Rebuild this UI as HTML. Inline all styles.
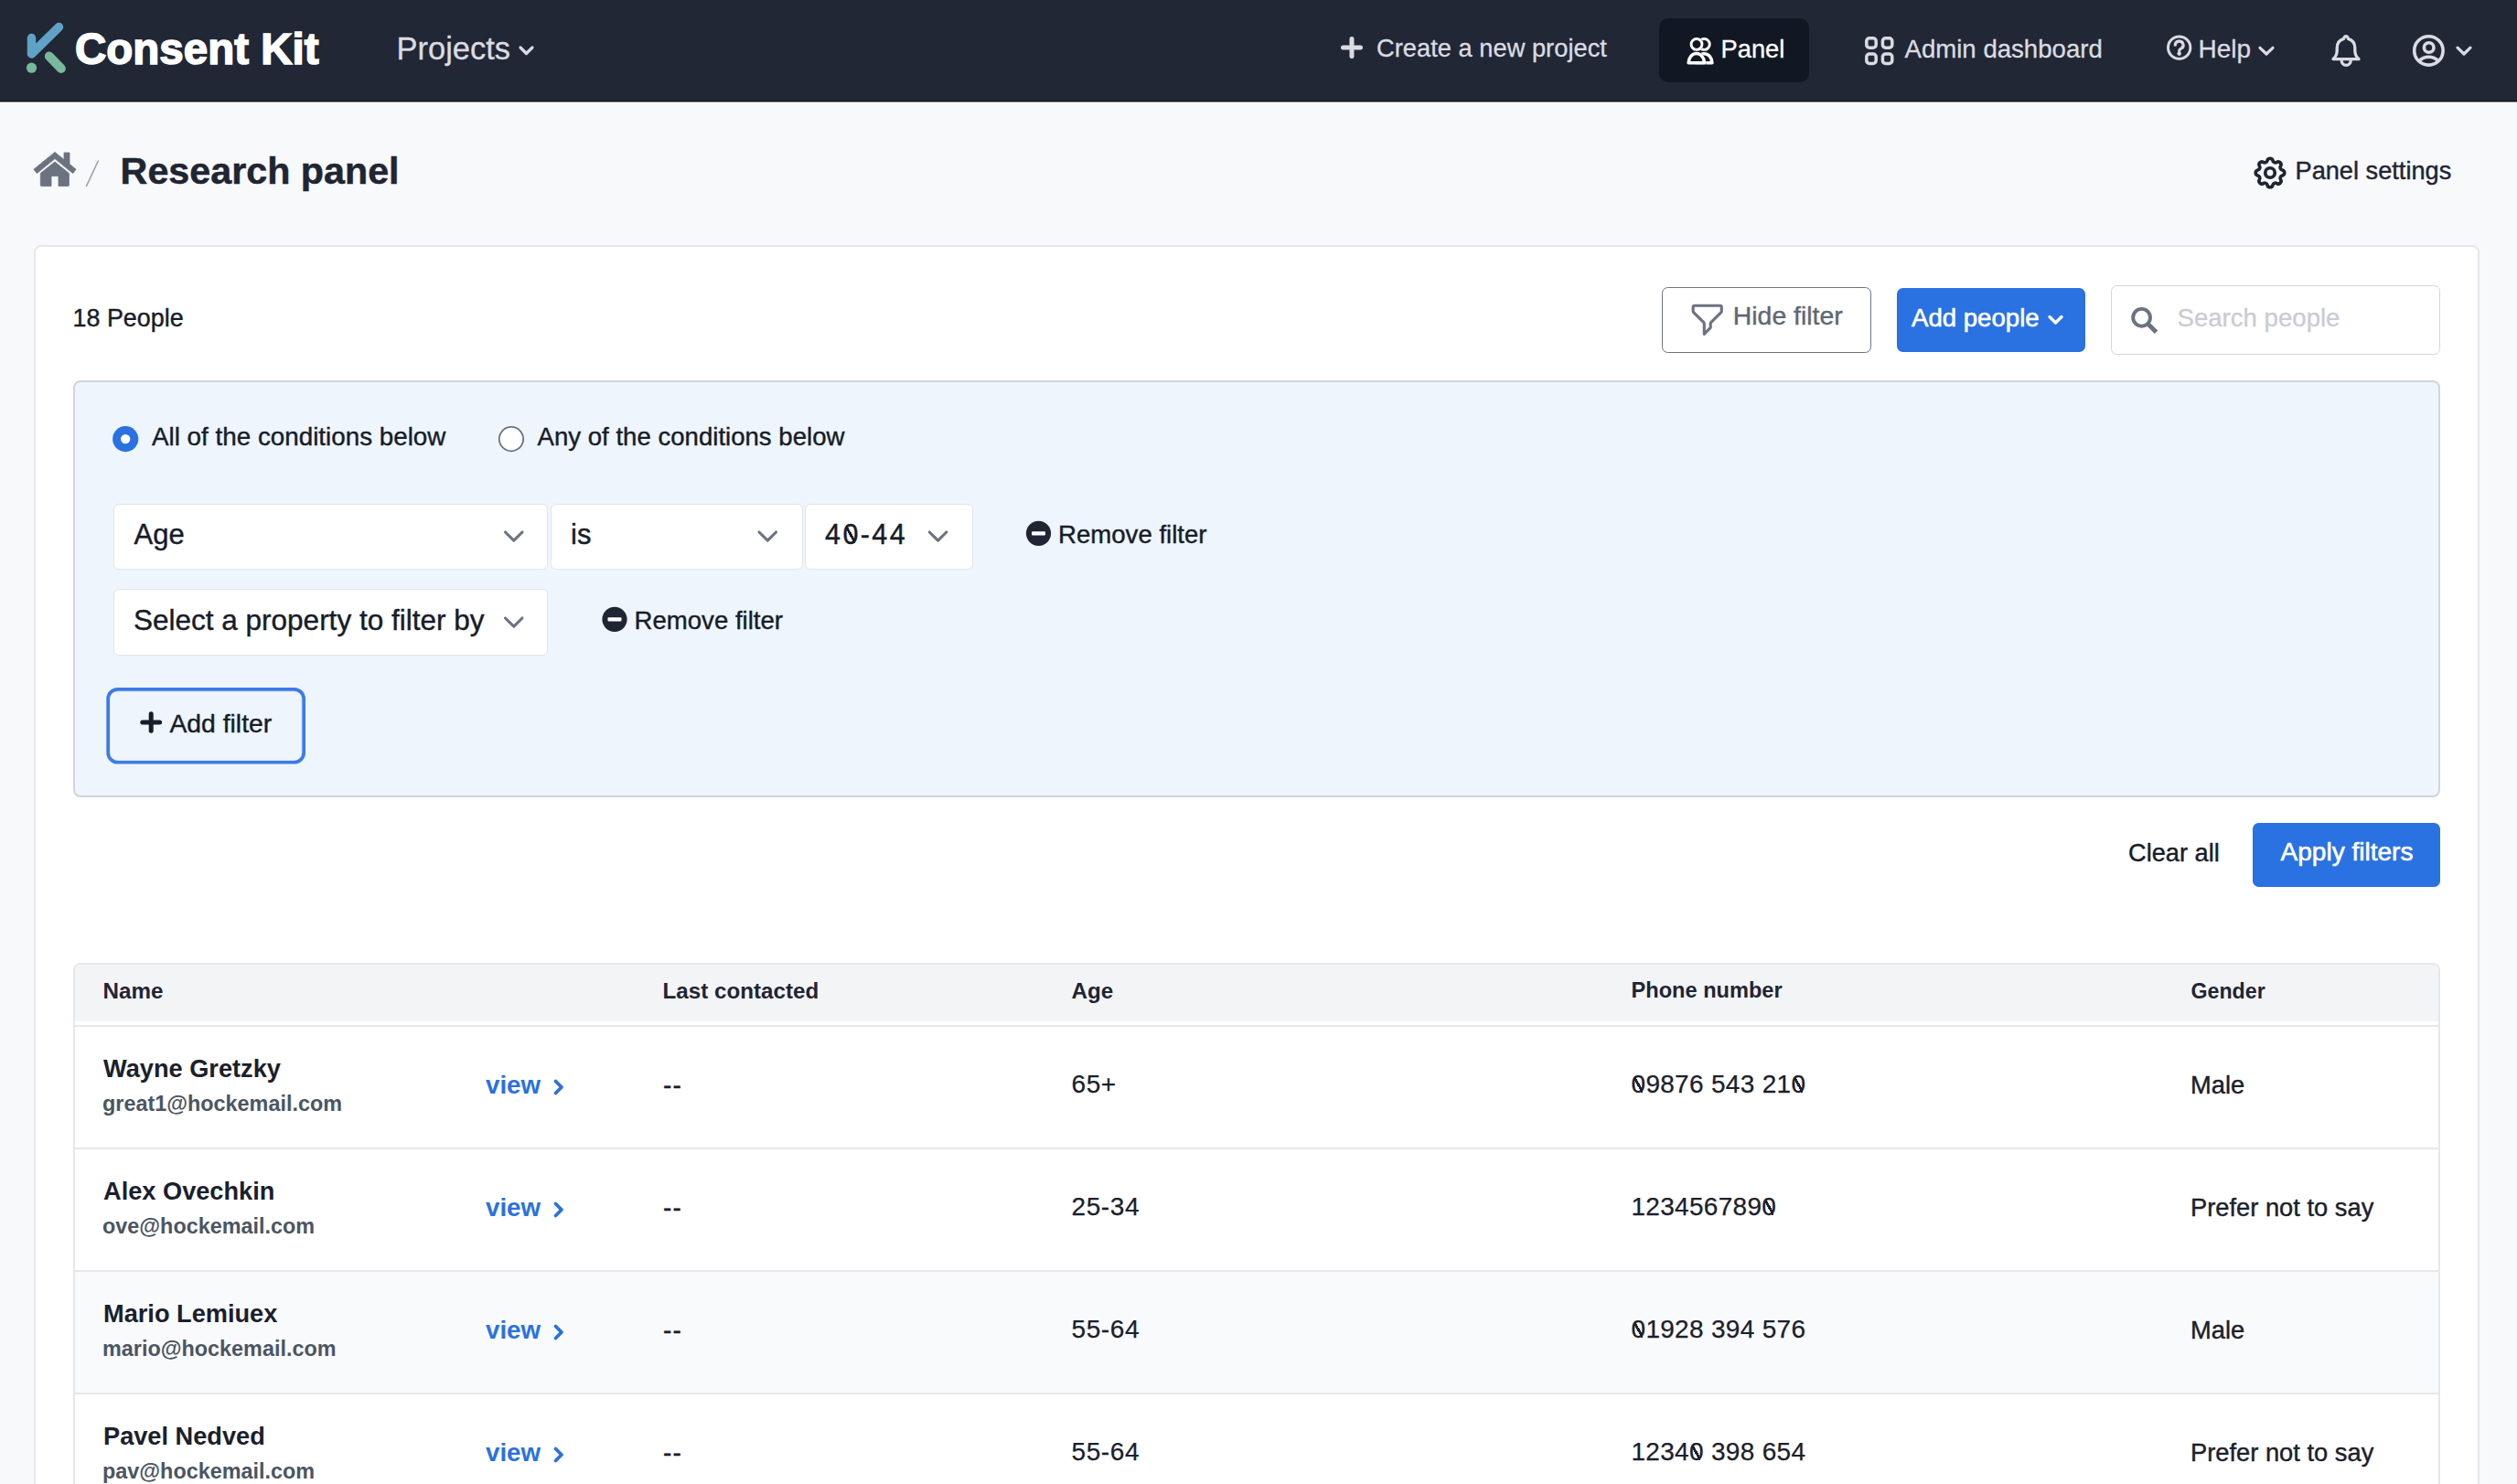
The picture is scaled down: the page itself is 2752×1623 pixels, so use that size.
<!DOCTYPE html>
<html><head><meta charset="utf-8">
<style>
html,body{margin:0;padding:0;}
body{width:2752px;height:1623px;overflow:hidden;position:relative;background:#f8f9fb;font-family:"Liberation Sans",sans-serif;color:#1f2533;}
.a{position:absolute;white-space:nowrap;line-height:1;}
.m{-webkit-text-stroke:0.4px currentColor;}
.mn{-webkit-text-stroke:0.25px currentColor;}
svg{position:absolute;left:0;top:0;overflow:visible;}
.z{position:relative;display:inline-block;}
.z::after{content:"";position:absolute;left:0.12em;width:0.32em;top:0.2em;height:0.6em;background:linear-gradient(to top right,transparent calc(50% - 1.4px),currentColor calc(50% - 1.4px),currentColor calc(50% + 1.4px),transparent calc(50% + 1.4px));}
.box{position:absolute;box-sizing:border-box;}
.sel{position:absolute;background:#fff;border:1.5px solid #e2e5ea;border-radius:6px;box-sizing:border-box;}
</style></head>
<body>
<div class="box" style="left:0;top:0;width:2752px;height:111px;background:#212735;border-bottom:1px solid #0d121c;"></div>
<div class="box" style="left:0;top:111px;width:2752px;height:1px;background:#80858e;"></div>
<div class="box" style="left:0;top:112px;width:2752px;height:1px;background:#fdfdfe;"></div>
<svg width="1" height="1">
  <path d="M34.5,41.5 L34.5,59 L64.5,29.5" fill="none" stroke="#5fa2c6" stroke-width="9.5" stroke-linecap="round" stroke-linejoin="round"/>
  <circle cx="34.5" cy="74.2" r="5.6" fill="#78b89c"/>
  <path d="M53.8,61.5 L66.9,74.9" fill="none" stroke="#78b89c" stroke-width="10" stroke-linecap="round"/>
</svg>
<div class="a" style="left:82.0px;top:29.62px;font-size:47.5px;font-weight:700;color:#fff;-webkit-text-stroke:1.6px #fff;letter-spacing:0px;">Consent Kit</div>
<div class="a" style="left:433.5px;top:35.67px;font-size:34.5px;font-weight:400;color:#dadce2;-webkit-text-stroke:0.3px currentColor;">Projects</div>
<svg width="1" height="1"><path d="M569,52 L575.5,58.5 L582,52" fill="none" stroke="#dadce2" stroke-width="3.2" stroke-linecap="round" stroke-linejoin="round"/></svg>
<svg width="1" height="1"><path d="M1478,42.5 V61.5 M1468.5,52 H1487.5" fill="none" stroke="#dadce2" stroke-width="5" stroke-linecap="round"/></svg>
<div class="a" style="left:1505.0px;top:39.40px;font-size:27.3px;font-weight:400;color:#dadce2;-webkit-text-stroke:0.3px currentColor;">Create a new project</div>
<div class="box" style="left:1814px;top:20px;width:164px;height:70px;background:#121823;border-radius:10px;"></div>
<svg width="1" height="1">
  <defs><mask id="pm" maskUnits="userSpaceOnUse" x="1820" y="25" width="80" height="60">
    <rect x="1820" y="25" width="80" height="60" fill="#fff"/>
    <circle cx="1855" cy="48.4" r="7.4" fill="#000"/>
    <path d="M1844.4,70.45 V68.7 A10.45,11.85 0 0 1 1865.3,68.7 V70.45 Z" fill="#000"/>
  </mask></defs>
  <g fill="none" stroke="#fff" stroke-linejoin="round">
    <circle cx="1855" cy="48.4" r="5.95" stroke-width="2.9"/>
    <path d="M1846.15,68.7 A8.7,10.1 0 0 1 1863.55,68.7 Z" stroke-width="3.5"/>
    <g mask="url(#pm)">
      <circle cx="1863.3" cy="48.4" r="5.95" stroke-width="2.9"/>
      <path d="M1854.55,68.7 A8.7,10.1 0 0 1 1871.95,68.7 Z" stroke-width="3.5"/>
    </g>
  </g>
</svg>
<div class="a" style="left:1881.5px;top:39.80px;font-size:27.3px;font-weight:400;color:#fff;-webkit-text-stroke:0.3px currentColor;">Panel</div>
<svg width="1" height="1">
  <g fill="none" stroke="#dadce2" stroke-width="3.5">
  <rect x="2040.8" y="41.8" width="10.4" height="10.4" rx="3.2"/>
  <rect x="2058.4" y="41.8" width="10.4" height="10.4" rx="3.2"/>
  <rect x="2040.8" y="59.1" width="10.4" height="10.4" rx="3.2"/>
  <rect x="2058.4" y="59.1" width="10.4" height="10.4" rx="3.2"/>
  </g>
</svg>
<div class="a" style="left:2082.5px;top:39.54px;font-size:27.6px;font-weight:400;color:#dadce2;-webkit-text-stroke:0.3px currentColor;">Admin dashboard</div>
<svg width="1" height="1">
  <circle cx="2382.7" cy="52.1" r="12.2" fill="none" stroke="#dadce2" stroke-width="3"/>
  <path d="M2378.3,49.2 A4.4,4.2 0 1 1 2384.6,53.1 C2383.1,53.9 2382.7,54.6 2382.7,55.4" fill="none" stroke="#dadce2" stroke-width="3.2" stroke-linecap="round"/>
  <circle cx="2382.7" cy="58.6" r="2.3" fill="#dadce2"/>
</svg>
<div class="a" style="left:2403.5px;top:39.80px;font-size:28px;font-weight:400;color:#dadce2;-webkit-text-stroke:0.3px currentColor;">Help</div>
<svg width="1" height="1"><path d="M2471,52.3 L2478,59 L2485,52.3" fill="none" stroke="#dadce2" stroke-width="3.2" stroke-linecap="round" stroke-linejoin="round"/></svg>
<svg width="1" height="1">
  <g fill="none" stroke="#dadce2" stroke-width="3.3" stroke-linejoin="round" stroke-linecap="round">
  <path d="M2551,64.6 C2554,62 2555.2,59.5 2555.2,55.5 V52.5 C2555.2,47 2558.5,43.5 2562.6,42.3 C2563,40.6 2564,39.6 2565,39.6 C2566,39.6 2567,40.6 2567.4,42.3 C2571.5,43.5 2574.8,47 2574.8,52.5 V55.5 C2574.8,59.5 2576,62 2579,64.6 Z"/>
  <path d="M2560.2,66.3 A5,5 0 0 0 2570.2,66.3"/>
  </g>
</svg>
<svg width="1" height="1">
  <g fill="none" stroke="#dadce2" stroke-width="3.6">
  <circle cx="2655.4" cy="55.4" r="15.7"/>
  <circle cx="2655.7" cy="52" r="5.3"/>
  <path d="M2645,66.8 C2648,63.6 2651.5,62.3 2655.5,62.3 C2659.5,62.3 2663,63.6 2666,66.8"/>
  </g>
  <path d="M2687,52.2 L2694,59 L2701,52.2" fill="none" stroke="#dadce2" stroke-width="3.2" stroke-linecap="round" stroke-linejoin="round"/>
</svg>
<svg width="1" height="1">
  <g fill="#6b7280" stroke="#6b7280" stroke-width="0.8" stroke-linejoin="round">
  <path d="M36.9,185.2 L60,166.4 L83.1,185.2 L79.6,189.6 L60,173.6 L40.4,189.6 Z"/>
  <rect x="70" y="167" width="6" height="13"/>
  <path d="M44.3,189.5 L60,177 L75.4,189.5 V202.5 Q75.4,203.6 74.3,203.6 H64 V192.6 H56 V203.6 H45.4 Q44.3,203.6 44.3,202.5 Z"/>
  </g>
  <path d="M94.6,203.3 L107.3,176" stroke="#9ca3af" stroke-width="1.6" stroke-linecap="round"/>
</svg>
<div class="a" style="left:131.6px;top:166.74px;font-size:41.25px;font-weight:700;color:#1f2533;-webkit-text-stroke:0.5px currentColor;">Research panel</div>
<svg style="left:2460.6px;top:168.3px" width="42" height="42" viewBox="0 0 24 24">
  <g fill="none" stroke="#1f2533" stroke-width="2.1" stroke-linecap="round" stroke-linejoin="round">
  <path d="M10.325 4.317c.426-1.756 2.924-1.756 3.35 0a1.724 1.724 0 002.573 1.066c1.543-.94 3.31.826 2.37 2.37a1.724 1.724 0 001.065 2.572c1.756.426 1.756 2.924 0 3.35a1.724 1.724 0 00-1.066 2.573c.94 1.543-.826 3.31-2.37 2.37a1.724 1.724 0 00-2.572 1.065c-.426 1.756-2.924 1.756-3.35 0a1.724 1.724 0 00-2.573-1.066c-1.543.94-3.310-.826-2.370-2.370a1.724 1.724 0 00-1.065-2.572c-1.756-.426-1.756-2.924 0-3.350a1.724 1.724 0 001.066-2.573c-.94-1.543.826-3.310 2.370-2.370.996.608 2.296.07 2.572-1.065z"/>
  <path d="M15 12a3 3 0 11-6 0 3 3 0 016 0z"/>
  </g>
</svg>
<div class="a" style="left:2509.5px;top:173.38px;font-size:27.2px;font-weight:400;color:#1f2533;-webkit-text-stroke:0.4px currentColor;">Panel settings</div>
<div class="box" style="left:37px;top:268px;width:2674px;height:1500px;background:#fff;border:2px solid #e5e7eb;border-radius:8px;"></div>
<div class="a" style="left:79.5px;top:335.03px;font-size:26.9px;font-weight:400;color:#161c28;-webkit-text-stroke:0.4px currentColor;">18 People</div>
<div class="box" style="left:1816.5px;top:313.5px;width:229.5px;height:72.5px;border:1.75px solid #6b7280;border-radius:6.5px;background:#fff;"></div>
<svg style="left:1846px;top:328.7px" width="41.5" height="41.5" viewBox="0 0 24 24">
  <path d="M3 4a1 1 0 011-1h16a1 1 0 011 1v2.586a1 1 0 01-.293.707l-6.414 6.414a1 1 0 00-.293.707V17l-4 4v-6.586a1 1 0 00-.293-.707L3.293 7.293A1 1 0 013 6.586V4z" fill="none" stroke="#6b7280" stroke-width="1.8" stroke-linecap="round" stroke-linejoin="round"/>
</svg>
<div class="a" style="left:1894.8px;top:330.96px;font-size:28.4px;font-weight:400;color:#5f6774;-webkit-text-stroke:0.4px currentColor;">Hide filter</div>
<div class="box" style="left:2074px;top:315px;width:206px;height:70px;border-radius:6.5px;background:#2a71e1;"></div>
<div class="a" style="left:2090.0px;top:333.74px;font-size:27.6px;font-weight:400;color:#fff;-webkit-text-stroke:0.6px currentColor;">Add people</div>
<svg width="1" height="1"><path d="M2241,346.5 L2247.5,353 L2254,346.5" fill="none" stroke="#fff" stroke-width="3.4" stroke-linecap="round" stroke-linejoin="round"/></svg>
<div class="box" style="left:2308px;top:312px;width:359.5px;height:75.5px;border:1.5px solid #d3d6dc;border-radius:6.5px;background:#fff;"></div>
<svg width="1" height="1">
  <circle cx="2341.6" cy="347.3" r="9.4" fill="none" stroke="#6b7280" stroke-width="3.9"/>
  <path d="M2348,353.7 L2357.6,363.3" stroke="#6b7280" stroke-width="4.8" stroke-linecap="butt"/>
</svg>
<div class="a" style="left:2380.5px;top:333.54px;font-size:27.6px;font-weight:400;color:#c9ccd3;-webkit-text-stroke:0.3px currentColor;">Search people</div>
<div class="box" style="left:80px;top:416px;width:2588px;height:456px;background:#eef5fd;border:2px solid #d1d5db;border-radius:8px;"></div>
<svg width="1" height="1">
  <circle cx="137.2" cy="480.1" r="14.1" fill="#2a71e1"/>
  <circle cx="137.2" cy="480.1" r="5.2" fill="#fff"/>
  <circle cx="559" cy="480.1" r="13.2" fill="#fff" stroke="#6b7280" stroke-width="1.8"/>
</svg>
<div class="a" style="left:166.0px;top:464.07px;font-size:27.8px;font-weight:400;color:#161c28;-webkit-text-stroke:0.4px currentColor;">All of the conditions below</div>
<div class="a" style="left:587.5px;top:464.24px;font-size:27.6px;font-weight:400;color:#161c28;-webkit-text-stroke:0.4px currentColor;">Any of the conditions below</div>
<div class="sel" style="left:124px;top:550.5px;width:475px;height:72px;"></div>
<div class="sel" style="left:602px;top:550.5px;width:276px;height:72px;"></div>
<div class="sel" style="left:880px;top:550.5px;width:183.5px;height:72px;"></div>
<div class="sel" style="left:124px;top:644px;width:475px;height:72.5px;"></div>
<div class="a" style="left:146.5px;top:568.85px;font-size:31px;font-weight:400;color:#161c28;-webkit-text-stroke:0.4px currentColor;">Age</div>
<div class="a" style="left:624.0px;top:568.85px;font-size:31px;font-weight:400;color:#161c28;-webkit-text-stroke:0.4px currentColor;">is</div>
<div class="a" style="left:902.0px;top:569.28px;font-size:30.5px;font-weight:400;color:#161c28;-webkit-text-stroke:0.4px currentColor;letter-spacing:2.4px;">4<span class="z">0</span>-44</div>
<div class="a" style="left:146.0px;top:662.62px;font-size:31.5px;font-weight:400;color:#161c28;-webkit-text-stroke:0.4px currentColor;">Select a property to filter by</div>
<svg width="1" height="1">
  <g fill="none" stroke="#6b7280" stroke-width="3.1" stroke-linecap="round" stroke-linejoin="round">
  <path d="M552.5,582 L561.8,591.2 L571,582"/>
  <path d="M830,582 L839.3,591.2 L848.5,582"/>
  <path d="M1016.3,582 L1025.6,591.2 L1034.8,582"/>
  <path d="M552.5,676 L561.8,685.2 L571,676"/>
  </g>
</svg>
<svg width="1" height="1">
  <circle cx="1135.5" cy="583.3" r="13.6" fill="#1f2533"/>
  <rect x="1128" y="581.3" width="15" height="4.3" rx="1" fill="#fff"/>
  <circle cx="672" cy="677.3" r="13.6" fill="#1f2533"/>
  <rect x="664.5" y="675.3" width="15" height="4.3" rx="1" fill="#fff"/>
</svg>
<div class="a" style="left:1157.0px;top:570.74px;font-size:27.6px;font-weight:400;color:#161c28;-webkit-text-stroke:0.4px currentColor;">Remove filter</div>
<div class="a" style="left:693.5px;top:664.74px;font-size:27.6px;font-weight:400;color:#161c28;-webkit-text-stroke:0.4px currentColor;">Remove filter</div>
<div class="box" style="left:120px;top:756px;width:210.2px;height:75.5px;border:1px solid #e3e6eb;border-radius:6px;"></div>
<svg width="1" height="1"><rect x="118.15" y="753.85" width="214" height="79.9" rx="10.5" fill="none" stroke="#3b7be8" stroke-width="3.7"/></svg>
<svg width="1" height="1"><path d="M165.2,780.8 V799.2 M155.8,790 H174.6" fill="none" stroke="#161c28" stroke-width="5" stroke-linecap="round"/></svg>
<div class="a" style="left:185.5px;top:776.75px;font-size:28.3px;font-weight:400;color:#161c28;-webkit-text-stroke:0.4px currentColor;">Add filter</div>
<div class="a" style="left:2327.0px;top:918.58px;font-size:27.2px;font-weight:400;color:#161c28;-webkit-text-stroke:0.4px currentColor;">Clear all</div>
<div class="box" style="left:2463px;top:900px;width:205px;height:70px;border-radius:6.5px;background:#2a71e1;"></div>
<div class="a" style="left:2493.5px;top:918.06px;font-size:28.05px;font-weight:400;color:#fff;-webkit-text-stroke:0.6px currentColor;">Apply filters</div>
<div class="box" style="left:80px;top:1053px;width:2588px;height:700px;border:2px solid #e5e7eb;border-radius:8px;overflow:hidden;background:#fff;">
  <div class="box" style="left:0;top:0;width:100%;height:62px;background:#f3f4f6;"></div>
  <div class="box" style="left:0;top:66px;width:100%;height:2px;background:#e5e7eb;"></div>
  <div class="box" style="left:0;top:200px;width:100%;height:2px;background:#e5e7eb;"></div>
  <div class="box" style="left:0;top:336px;width:100%;height:132px;background:#f9fafb;"></div>
  <div class="box" style="left:0;top:334px;width:100%;height:2px;background:#e5e7eb;"></div>
  <div class="box" style="left:0;top:468px;width:100%;height:2px;background:#e5e7eb;"></div>
</div>
<div class="a" style="left:112.5px;top:1071.83px;font-size:24.2px;font-weight:700;color:#1f2533;">Name</div>
<div class="a" style="left:724.5px;top:1071.83px;font-size:24.2px;font-weight:700;color:#1f2533;">Last contacted</div>
<div class="a" style="left:1171.5px;top:1071.83px;font-size:24.2px;font-weight:700;color:#1f2533;">Age</div>
<div class="a" style="left:1783.5px;top:1072.34px;font-size:23.6px;font-weight:700;color:#1f2533;">Phone number</div>
<div class="a" style="left:2395.5px;top:1072.68px;font-size:23.2px;font-weight:700;color:#1f2533;">Gender</div>
<div class="a" style="left:113.0px;top:1155.28px;font-size:27.2px;font-weight:700;color:#1a202c;">Wayne Gretzky</div>
<div class="a" style="left:112.0px;top:1196.11px;font-size:23.4px;font-weight:700;color:#4b5563;">great1@hockemail.com</div>
<div class="a" style="left:531.0px;top:1173.15px;font-size:27.7px;font-weight:700;color:#2a71e1;">view</div>
<svg width="1" height="1"><path d="M607.5,1182.5 L614,1189 L607.5,1195.5" fill="none" stroke="#2a71e1" stroke-width="3.8" stroke-linecap="round" stroke-linejoin="round"/></svg>
<div class="a" style="left:725.0px;top:1173.40px;font-size:28px;font-weight:400;color:#1a202c;-webkit-text-stroke:0.4px currentColor;letter-spacing:1.2px;">--</div>
<div class="a" style="left:1171.5px;top:1172.40px;font-size:28px;font-weight:400;color:#1a202c;-webkit-text-stroke:0.25px currentColor;letter-spacing:0.6px;">65+</div>
<div class="a" style="left:1783.5px;top:1172.40px;font-size:28px;font-weight:400;color:#1a202c;-webkit-text-stroke:0.25px currentColor;letter-spacing:0.3px;"><span class="z">0</span>9876 543 21<span class="z">0</span></div>
<div class="a" style="left:2395.0px;top:1173.00px;font-size:27.3px;font-weight:400;color:#1a202c;-webkit-text-stroke:0.4px currentColor;">Male</div>
<div class="a" style="left:113.0px;top:1289.28px;font-size:27.2px;font-weight:700;color:#1a202c;">Alex Ovechkin</div>
<div class="a" style="left:112.0px;top:1330.11px;font-size:23.4px;font-weight:700;color:#4b5563;">ove@hockemail.com</div>
<div class="a" style="left:531.0px;top:1307.15px;font-size:27.7px;font-weight:700;color:#2a71e1;">view</div>
<svg width="1" height="1"><path d="M607.5,1316.5 L614,1323 L607.5,1329.5" fill="none" stroke="#2a71e1" stroke-width="3.8" stroke-linecap="round" stroke-linejoin="round"/></svg>
<div class="a" style="left:725.0px;top:1307.40px;font-size:28px;font-weight:400;color:#1a202c;-webkit-text-stroke:0.4px currentColor;letter-spacing:1.2px;">--</div>
<div class="a" style="left:1171.5px;top:1306.40px;font-size:28px;font-weight:400;color:#1a202c;-webkit-text-stroke:0.25px currentColor;letter-spacing:0.6px;">25-34</div>
<div class="a" style="left:1783.5px;top:1306.40px;font-size:28px;font-weight:400;color:#1a202c;-webkit-text-stroke:0.25px currentColor;letter-spacing:0.3px;">123456789<span class="z">0</span></div>
<div class="a" style="left:2395.0px;top:1307.00px;font-size:27.3px;font-weight:400;color:#1a202c;-webkit-text-stroke:0.4px currentColor;">Prefer not to say</div>
<div class="a" style="left:113.0px;top:1423.28px;font-size:27.2px;font-weight:700;color:#1a202c;">Mario Lemiuex</div>
<div class="a" style="left:112.0px;top:1464.11px;font-size:23.4px;font-weight:700;color:#4b5563;">mario@hockemail.com</div>
<div class="a" style="left:531.0px;top:1441.15px;font-size:27.7px;font-weight:700;color:#2a71e1;">view</div>
<svg width="1" height="1"><path d="M607.5,1450.5 L614,1457 L607.5,1463.5" fill="none" stroke="#2a71e1" stroke-width="3.8" stroke-linecap="round" stroke-linejoin="round"/></svg>
<div class="a" style="left:725.0px;top:1441.40px;font-size:28px;font-weight:400;color:#1a202c;-webkit-text-stroke:0.4px currentColor;letter-spacing:1.2px;">--</div>
<div class="a" style="left:1171.5px;top:1440.40px;font-size:28px;font-weight:400;color:#1a202c;-webkit-text-stroke:0.25px currentColor;letter-spacing:0.6px;">55-64</div>
<div class="a" style="left:1783.5px;top:1440.40px;font-size:28px;font-weight:400;color:#1a202c;-webkit-text-stroke:0.25px currentColor;letter-spacing:0.3px;"><span class="z">0</span>1928 394 576</div>
<div class="a" style="left:2395.0px;top:1441.00px;font-size:27.3px;font-weight:400;color:#1a202c;-webkit-text-stroke:0.4px currentColor;">Male</div>
<div class="a" style="left:113.0px;top:1557.28px;font-size:27.2px;font-weight:700;color:#1a202c;">Pavel Nedved</div>
<div class="a" style="left:112.0px;top:1598.11px;font-size:23.4px;font-weight:700;color:#4b5563;">pav@hockemail.com</div>
<div class="a" style="left:531.0px;top:1575.15px;font-size:27.7px;font-weight:700;color:#2a71e1;">view</div>
<svg width="1" height="1"><path d="M607.5,1584.5 L614,1591 L607.5,1597.5" fill="none" stroke="#2a71e1" stroke-width="3.8" stroke-linecap="round" stroke-linejoin="round"/></svg>
<div class="a" style="left:725.0px;top:1575.40px;font-size:28px;font-weight:400;color:#1a202c;-webkit-text-stroke:0.4px currentColor;letter-spacing:1.2px;">--</div>
<div class="a" style="left:1171.5px;top:1574.40px;font-size:28px;font-weight:400;color:#1a202c;-webkit-text-stroke:0.25px currentColor;letter-spacing:0.6px;">55-64</div>
<div class="a" style="left:1783.5px;top:1574.40px;font-size:28px;font-weight:400;color:#1a202c;-webkit-text-stroke:0.25px currentColor;letter-spacing:0.3px;">1234<span class="z">0</span> 398 654</div>
<div class="a" style="left:2395.0px;top:1575.00px;font-size:27.3px;font-weight:400;color:#1a202c;-webkit-text-stroke:0.4px currentColor;">Prefer not to say</div>
</body></html>
